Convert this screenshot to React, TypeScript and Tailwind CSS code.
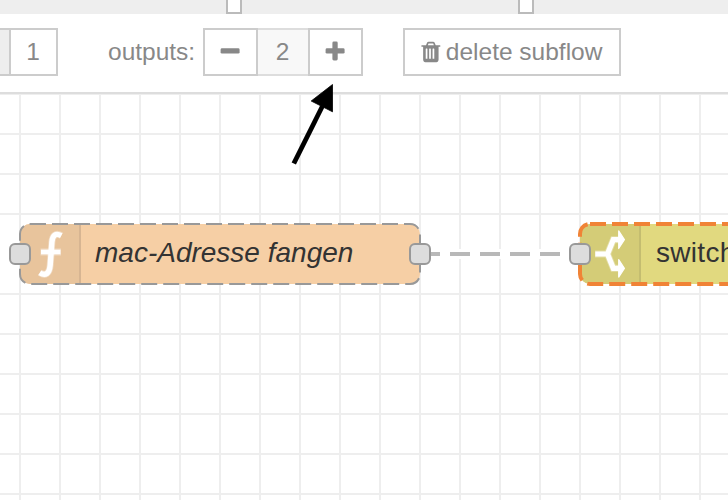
import React from "react";

function TrashIcon() {
  return (
    <svg width="24" height="24" viewBox="0 0 1792 1792" fill="currentColor" className="-ml-[3.2px] -mr-[3px] -mt-px shrink-0">
      <path d="M704 1376V672q0-14-9-23t-23-9h-64q-14 0-23 9t-9 23v704q0 14 9 23t23 9h64q14 0 23-9t9-23zm256 0V672q0-14-9-23t-23-9h-64q-14 0-23 9t-9 23v704q0 14 9 23t23 9h64q14 0 23-9t9-23zm256 0V672q0-14-9-23t-23-9h-64q-14 0-23 9t-9 23v704q0 14 9 23t23 9h64q14 0 23-9t9-23zM736 384h448l-48-117q-7-9-17-11H802q-10 2-17 11zm928 32v64q0 14-9 23t-23 9h-96v948q0 83-47 143.500t-113 60.500H544q-66 0-113-58.500T384 1464V512h-96q-14 0-23-9t-9-23v-64q0-14 9-23t23-9h309l70-167q15-37 54-63t79-26h320q40 0 79 26t54 63l70 167h309q14 0 23 9t9 23z" />
    </svg>
  );
}

function TabBar() {
  return (
    <div className="flex h-[14px] shrink-0 items-start bg-[#eeeeee] pl-[226px]">
      <div className="h-[14px] w-4 border-2 border-t-0 border-[#bbbbbb] bg-white" />
      <div className="ml-[276px] h-[14px] w-4 border-2 border-t-0 border-[#bbbbbb] bg-white" />
    </div>
  );
}

function Toolbar() {
  return (
    <div className="flex h-[80px] shrink-0 items-start border-b-2 border-[#dddddd] bg-white pt-[14px] text-[24.5px] leading-[44px] text-[#888888]">
      <div className="flex h-12 w-[58px] border-2 border-l-0 border-[#cccccc]">
        <div className="w-[11px] border-r-2 border-[#cccccc] bg-[#eeeeee]" />
        <div className="flex-1 pr-px text-center">1</div>
      </div>
      <div className="ml-[50px] w-[95px] whitespace-nowrap pt-[2px]">outputs:</div>
      <div className="flex h-12 w-[160px]">
        <div className="flex w-[55px] items-center justify-center border-2 border-[#cccccc]">
          <svg width="20" height="20" viewBox="0 0 20 20" fill="currentColor" className="-mt-[3px] mr-px">
            <rect x="0.6" y="7.3" width="19" height="5.300" rx="1.400" />
          </svg>
        </div>
        <div className="w-[50px] border-y-2 border-[#dddddd] bg-[#f8f8f8] pr-px text-center">2</div>
        <div className="flex w-[55px] items-center justify-center border-2 border-[#cccccc]">
          <svg width="20" height="20" viewBox="0 0 20 20" fill="currentColor" className="-mt-[3px] mr-px">
            <rect x="0.6" y="7.3" width="19" height="5.300" rx="1.400" />
            <rect x="7.4" y="0.5" width="5.300" height="19" rx="1.400" />
          </svg>
        </div>
      </div>
      <div className="ml-10 flex h-12 w-[218px] items-center whitespace-nowrap border-2 border-[#cccccc] pl-4">
        <TrashIcon />
        <span className="ml-[7px]">delete subflow</span>
      </div>
    </div>
  );
}

const verticals = Array.from({ length: 18 }, (_, i) => 20 + i * 40);
const horizontals = Array.from({ length: 11 }, (_, i) => i * 40);

function Backdrop() {
  return (
    <svg width="728" height="406" className="absolute left-0 top-0">
      <g stroke="#eeeeee" strokeWidth="2">
        {verticals.map((x) => (
          <line key={x} x1={x} x2={x} y1="0" y2="406" />
        ))}
        {horizontals.map((y) => (
          <line key={y} x1="0" x2="728" y1={y} y2={y} />
        ))}
      </g>
      <line x1="0" x2="580" y1="160" y2="160" stroke="white" strokeWidth="10" />
      <line x1="420" x2="580" y1="160" y2="160" stroke="#b8b8b8" strokeWidth="4" strokeDasharray="20 10" />
    </svg>
  );
}

function Port({ className }: { className: string }) {
  return <div className={"absolute top-[19px] h-[22px] w-[22px] rounded-[6px] border-2 border-[#999999] bg-[#dddddd] " + className} />;
}

function FunctionNode() {
  return (
    <div className="absolute left-5 top-[130px] flex h-[60px] w-[400px] rounded-[10px] bg-[#f6cfa5]">
      <div className="flex w-[61px] rounded-l-[10px] border-r-2 border-[#d7b592] bg-[#e8c49c]">
        <svg width="59" height="60" viewBox="20 224 59 60" fill="none" stroke="white">
          <g strokeOpacity="0.35" strokeWidth="7">
            <path d="M61.300 235.600C55.500 232.500 52.500 235.500 51.900 242L50.200 265C49.500 273.500 45.500 276.500 39.800 272.700" />
            <path d="M40.500 252H61" />
          </g>
          <path d="M61.300 235.600C55.500 232.500 52.500 235.500 51.900 242L50.200 265C49.500 273.500 45.500 276.500 39.800 272.700" strokeWidth="5.400" />
          <path d="M41 252H60.500" strokeWidth="4.600" />
        </svg>
      </div>
      <div className="whitespace-nowrap pl-[14px] text-[28px] italic leading-[58px] text-[#333333]">mac-Adresse fangen</div>
      <svg width="404" height="64" viewBox="-2 -2 404 64" className="absolute -left-[2px] -top-[2px]">
        <rect width="400" height="60" rx="10" fill="none" stroke="#999999" strokeWidth="2" strokeDasharray="16 6" />
      </svg>
      <Port className="-left-[11px]" />
      <Port className="-right-[11px]" />
    </div>
  );
}

function SwitchNode() {
  return (
    <div className="absolute left-[580px] top-[130px] flex h-[60px] w-[200px] rounded-[10px] bg-[#e1d97f]">
      <div className="w-[61px] rounded-l-[10px] border-r-2 border-[#c4bd70] bg-[#d4cc77]">
        <svg width="59" height="60" viewBox="580 224 59 60" stroke="white">
          <path d="M595 254H607.500L613.300 239.700H620M607.500 254L613.300 268.300H620" fill="none" strokeWidth="7" strokeOpacity="0.35" />
          <path d="M595.300 254H607.500L613.300 239.700H620M607.500 254L613.300 268.300H620" fill="none" strokeWidth="5.200" />
          <path d="M618.700 230.900L624.400 239.700L618.700 248.500ZM618.700 259.500L624.400 268.300L618.700 277.100Z" fill="white" strokeWidth="1.200" strokeLinejoin="round" />
        </svg>
      </div>
      <div className="pl-[15px] text-[28px] leading-[58px] tracking-[0.3px] text-[#333333]">switch</div>
      <svg width="204" height="64" viewBox="-2 -2 204 64" className="absolute -left-[2px] -top-[2px]">
        <rect width="200" height="60" rx="10" fill="none" stroke="#f08336" strokeWidth="4" strokeDasharray="16 6" />
      </svg>
      <Port className="-left-[11px]" />
    </div>
  );
}

function PointerArrow() {
  return (
    <svg width="50" height="90" viewBox="288 80 50 90" className="absolute left-[288px] top-[-14px]">
      <path d="M293.800 163.500L322.500 106" stroke="black" strokeWidth="4.800" />
      <path d="M332.500 84.500L311.200 101L332.500 111.800Z" fill="black" stroke="black" strokeWidth="0.8" strokeLinejoin="round" />
    </svg>
  );
}

export default function App() {
  return (
    <div className="flex h-[500px] w-[728px] flex-col overflow-hidden bg-white font-['Liberation_Sans',Arial,sans-serif]">
      <TabBar />
      <Toolbar />
      <div className="relative h-[406px] shrink-0">
        <Backdrop />
        <FunctionNode />
        <SwitchNode />
        <PointerArrow />
      </div>
    </div>
  );
}
